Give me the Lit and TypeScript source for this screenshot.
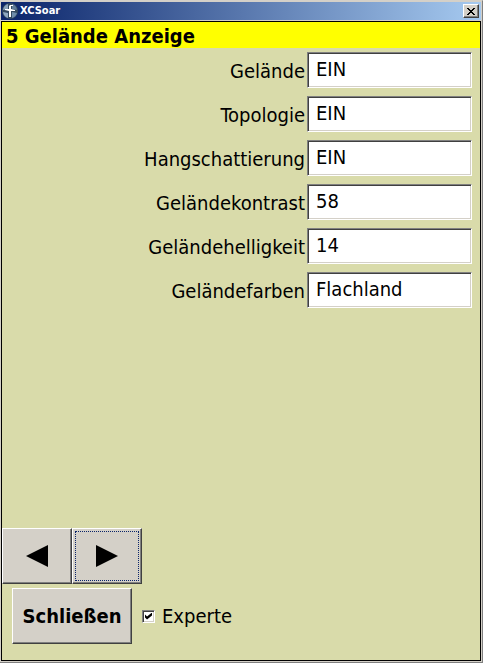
import { LitElement, html, css, svg } from "lit";
import { customElement, state } from "lit/decorators.js";

interface Setting {
  id: string;
  label: string;
  value: string;
}

@customElement("app-root")
export class AppRoot extends LitElement {
  static styles = css`
    :host {
      display: block;
      font-family: "DejaVu Sans Condensed", "Noto Sans", sans-serif;
      font-size: 20px;
      color: #000;
    }
    * {
      box-sizing: border-box;
    }
    .window {
      display: flex;
      flex-direction: column;
      min-height: 100vh;
      background: #d4d0c8;
      border: solid;
      border-width: 1px 1px 1px 0;
      border-color: #d4d0c8 #808080 #808080 #d4d0c8;
      padding: 1px;
    }
    .titlebar {
      display: flex;
      align-items: center;
      gap: 2px;
      height: 18px;
      padding: 0 2px 0 1px;
      background: linear-gradient(to right, #0a246a, #a6caf0);
      color: #fff;
    }
    .logo {
      display: block;
      width: 16px;
      height: 16px;
    }
    .caption {
      flex: 1;
      margin: 0;
      font-size: 11px;
      line-height: 18px;
      font-weight: bold;
    }
    .raised {
      font-family: inherit;
      color: #000;
      padding: 0;
      border-radius: 0;
      background: #d4d0c8;
      border: solid;
      border-color: #fff #404040 #404040 #fff;
      border-width: 1px;
      box-shadow: inset -1px -1px #808080;
    }
    .close {
      display: grid;
      place-items: center;
      width: 16px;
      height: 14px;
    }
    .close svg {
      display: block;
    }
    .client {
      flex: 1;
      display: flex;
      flex-direction: column;
      margin-top: 1px;
      border: 1px solid #000;
      background: #d9dbaa;
    }
    .heading {
      margin: 0;
      padding: 2px 4px 0;
      background: #ff0;
      font-size: 20px;
      line-height: 24px;
      font-weight: bold;
    }
    .fields {
      display: grid;
      grid-template-columns: 1fr 165px;
      gap: 8px 2px;
      padding: 4px 8px 0 0;
    }
    .fields label {
      text-align: right;
      line-height: 38px;
      height: 36px;
    }
    .fields input {
      width: 100%;
      height: 36px;
      padding: 0 8px 2px;
      border: 1px solid;
      border-color: #808080 #fff #fff #808080;
      border-radius: 0;
      box-shadow: inset 1px 1px #404040, inset -1px -1px #d4d0c8;
      background: #fff;
      font: inherit;
      color: #000;
      outline: none;
    }
    .pager {
      display: flex;
      margin-top: auto;
    }
    .pager button {
      display: grid;
      place-items: center;
      width: 70px;
      height: 56px;
    }
    .focused {
      outline: 1px dotted #0a246a;
      outline-offset: -4px;
    }
    .footer {
      display: flex;
      align-items: center;
      gap: 10px;
      padding: 4px 10px 16px;
    }
    .dismiss {
      width: 120px;
      height: 56px;
      font-size: 20px;
      font-weight: bold;
    }
    .expert {
      display: flex;
      align-items: center;
      gap: 7px;
    }
    .expert input {
      appearance: none;
      width: 13px;
      height: 13px;
      margin: 0;
      border: 1px solid;
      border-color: #808080 #fff #fff #808080;
      box-shadow: inset 1px 1px #404040, inset -1px -1px #d4d0c8;
      background-color: #fff;
      display: grid;
      place-items: center;
    }
    .expert input:checked::before {
      content: "";
      width: 7px;
      height: 7px;
      background: #000;
      clip-path: polygon(0 29%, 29% 57%, 100% 0, 100% 43%, 29% 100%, 0 71%);
    }
  `;

  @state() private expert = true;

  private settings: Setting[] = [
    { id: "terrain", label: "Gelände", value: "EIN" },
    { id: "topology", label: "Topologie", value: "EIN" },
    { id: "shading", label: "Hangschattierung", value: "EIN" },
    { id: "contrast", label: "Geländekontrast", value: "58" },
    { id: "brightness", label: "Geländehelligkeit", value: "14" },
    { id: "colors", label: "Geländefarben", value: "Flachland" },
  ];

  private arrow(points: string) {
    return html`<svg width="22" height="22" viewBox="0 0 22 22" aria-hidden="true">
      ${svg`<polygon points=${points} />`}
    </svg>`;
  }

  render() {
    return html`
      <div class="window">
        <header class="titlebar">
          <svg class="logo" viewBox="0 0 16 16" aria-hidden="true">
            <circle cx="8" cy="8" r="8" fill="#33495f" />
            <path d="M1 7a7 7 0 0 1 5-6v5z" fill="#8ba3bb" />
            <path d="M10 1a7 7 0 0 1 5 6l-5-1z" fill="#5f7c9a" />
            <path d="M1 9l5 1v5a7 7 0 0 1-5-6z" fill="#8fa9c2" />
            <path d="M10 9l5 1a7 7 0 0 1-5 5z" fill="#6f8dab" />
            <path d="M8 2h3v1H9v3l4 1v1H9v6H7V8L3 7V6l4 0V3z" fill="#fff" />
          </svg>
          <h1 class="caption">XCSoar</h1>
          <button class="raised close" aria-label="Schließen">
            <svg width="8" height="7" viewBox="0 0 8 7" shape-rendering="crispEdges" aria-hidden="true">
              <path d="M0 0h2v1h1v1h2V1h1V0h2v1H7v1H6v1H5v1h1v1h1v1h1v1H6V6H5V5H3v1H2v1H0V6h1V5h1V4h1V3H2V2H1V1H0z" />
            </svg>
          </button>
        </header>
        <main class="client">
          <h2 class="heading">5 Gelände Anzeige</h2>
          <div class="fields">
            ${this.settings.map(
              (s) => html`<label for=${s.id}>${s.label}</label><input id=${s.id} type="text" .value=${s.value} />`
            )}
          </div>
          <nav class="pager">
            <button class="raised" aria-label="Vorherige Seite">${this.arrow("0,11 22,0 22,22")}</button>
            <button class="raised focused" aria-label="Nächste Seite">${this.arrow("22,11 0,0 0,22")}</button>
          </nav>
          <footer class="footer">
            <button class="raised dismiss">Schließen</button>
            <label class="expert">
              <input
                type="checkbox"
                .checked=${this.expert}
                @change=${(e: Event) => (this.expert = (e.target as HTMLInputElement).checked)}
              />
              Experte
            </label>
          </footer>
        </main>
      </div>
    `;
  }
}
